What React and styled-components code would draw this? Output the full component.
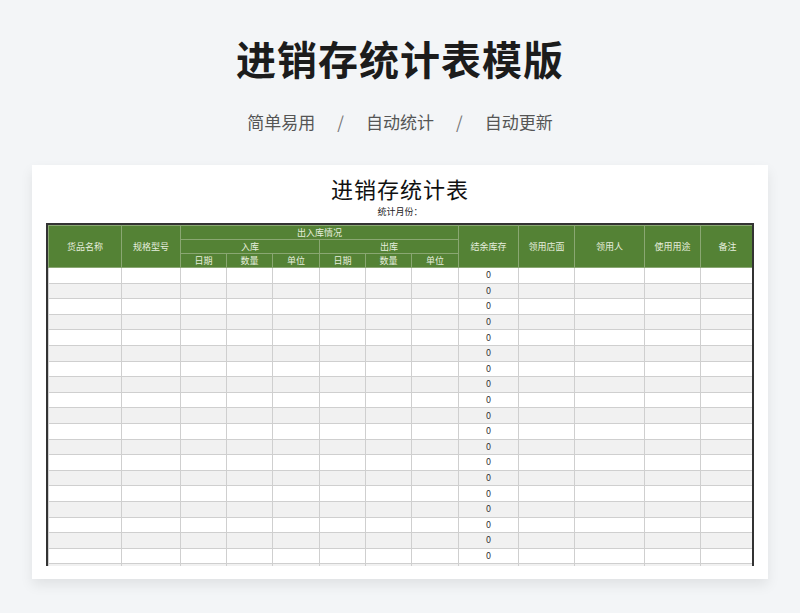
import React from "react";
import styled, { createGlobalStyle } from "styled-components";

const G = createGlobalStyle`
  html,body{margin:0;padding:0;background:#f3f5f7;}
  body{font-family:"Noto Sans CJK SC","Noto Sans",sans-serif;}
`;
const Page = styled.div`width:800px;height:613px;overflow:hidden;display:flex;flex-direction:column;align-items:center;`;
const Title = styled.h1`margin:32px 0 0;height:52px;line-height:52px;font-size:40px;font-weight:700;color:#1c1c1c;letter-spacing:1px;`;
const Sub = styled.div`margin-top:26px;display:flex;gap:22px;font-size:17px;color:#555;line-height:24px;`;
const Slash = styled.span`color:#777;`;
const Card = styled.div`margin-top:31px;width:736px;height:414px;background:#fff;box-shadow:0 6px 12px rgba(0,0,0,0.08);display:flex;flex-direction:column;align-items:center;`;
const SheetTitle = styled.div`margin-top:8px;font-size:22px;line-height:30px;color:#111;letter-spacing:1px;`;
const Month = styled.div`font-size:9px;line-height:14px;color:#222;margin-top:2px;`;
const Wrap = styled.div`margin-top:4px;width:708px;height:343px;overflow:hidden;border-left:2px solid #333;border-right:2px solid #333;border-top:2px solid #333;box-sizing:border-box;`;
const Table = styled.table`border-collapse:collapse;width:100%;table-layout:fixed;font-size:9px;`;
const Th = styled.th`background:#548235;color:#e6eede;font-weight:400;height:${p=>p.h||13}px;padding:0;border:1px solid #8aa772;line-height:12px;`;
const Td = styled.td`height:14.6px;padding:0;border:1px solid #cfcfcf;text-align:center;color:#333;background:${p=>p.alt?"#f1f1f1":"#fff"};line-height:12px;`;

const widths=[73,59,46,46,47,46,46,47,60,56,70,56,54];
export default function App(){
  const rows=Array.from({length:21});
  return <Page><G/>
    <Title>进销存统计表模版</Title>
    <Sub><span>简单易用</span><Slash>/</Slash><span>自动统计</span><Slash>/</Slash><span>自动更新</span></Sub>
    <Card>
      <SheetTitle>进销存统计表</SheetTitle>
      <Month>统计月份：</Month>
      <Wrap><Table>
        <colgroup>{widths.map((w,i)=><col key={i} style={{width:w}}/>)}</colgroup>
        <thead>
          <tr><Th rowSpan={3}>货品名称</Th><Th rowSpan={3}>规格型号</Th><Th colSpan={6}>出入库情况</Th>
            <Th rowSpan={3}>结余库存</Th><Th rowSpan={3}>领用店面</Th><Th rowSpan={3}>领用人</Th><Th rowSpan={3}>使用用途</Th><Th rowSpan={3}>备注</Th></tr>
          <tr><Th colSpan={3}>入库</Th><Th colSpan={3}>出库</Th></tr>
          <tr>{["日期","数量","单位","日期","数量","单位"].map((t,i)=><Th key={i}>{t}</Th>)}</tr>
        </thead>
        <tbody>{rows.map((_,r)=><tr key={r}>{widths.map((_,c)=><Td key={c} alt={r%2===1}>{c===8&&r<19?"0":""}</Td>)}</tr>)}</tbody>
      </Table></Wrap>
    </Card>
  </Page>;
}
